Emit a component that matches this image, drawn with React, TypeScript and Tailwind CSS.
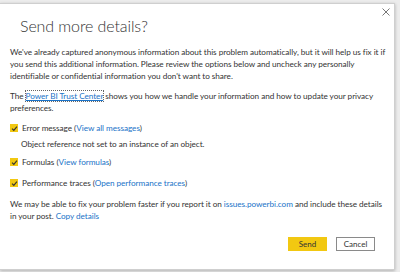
import React from "react";

function Check() {
  return (
    <span className="inline-flex items-center justify-center w-[8px] h-[8px] bg-[#f2c811] mr-[4px] shrink-0">
      <svg width="7" height="7" viewBox="0 0 8 8">
        <path d="M1.2 4.2 L3.2 6.2 L6.8 1.8" fill="none" stroke="#333" strokeWidth="1.3" />
      </svg>
    </span>
  );
}

export default function App() {
  const link = "text-[#1a73c8]";
  return (
    <div
      className="w-[400px] h-[272px] bg-[#ececec] overflow-hidden"
      style={{ fontFamily: "Lato, 'Open Sans', sans-serif" }}
    >
      <div className="pt-[3px]">
        <div className="relative w-[395px] h-[267px] bg-white border-t border-r border-b border-[#cfcfcf] shadow-[0_1px_3px_rgba(0,0,0,0.25)]">
          <button className="absolute top-[3px] right-[3px] w-[10px] h-[10px] flex items-center justify-center">
            <svg width="8" height="8" viewBox="0 0 8 8">
              <path d="M0.5 0.5 L7.5 7.5 M7.5 0.5 L0.5 7.5" stroke="#777" strokeWidth="1" />
            </svg>
          </button>
          <div className="pt-[10px] pl-[20px] text-[16px] tracking-[-0.1px] leading-[24px] font-light text-[#333] whitespace-nowrap">
            Send more details?
          </div>
          <div className="pl-[10px] text-[8.2px] tracking-[-0.05px] leading-[12px] text-[#333] whitespace-nowrap">
            <div className="mt-[8px]">
              We've already captured anonymous information about this problem automatically, but it will help us fix it if
            </div>
            <div>you send this additional information. Please review the options below and uncheck any personally</div>
            <div>identifiable or confidential information you don't want to share.</div>
            <div className="mt-[8px]">
              The{" "}
              <span className={`${link} underline outline outline-1 outline-dotted outline-[#666]`}>Power BI Trust Center</span>{" "}
              shows you how we handle your information and how to update your privacy
            </div>
            <div>preferences.</div>
            <div className="mt-[8px] flex items-center">
              <Check />
              <span>
                Error message (<span className={link}>View all messages</span>)
              </span>
            </div>
            <div className="mt-[4px] pl-[11px]">Object reference not set to an instance of an object.</div>
            <div className="mt-[6px] flex items-center">
              <Check />
              <span>
                Formulas (<span className={link}>View formulas</span>)
              </span>
            </div>
            <div className="mt-[9px] flex items-center">
              <Check />
              <span>
                Performance traces (<span className={link}>Open performance traces</span>)
              </span>
            </div>
            <div className="mt-[9px]">
              We may be able to fix your problem faster if you report it on{" "}
              <span className={link}>issues.powerbi.com</span> and include these details
            </div>
            <div>
              in your post. <span className={link}>Copy details</span>
            </div>
          </div>
          <div className="mt-[15px] pr-[19px] flex justify-end gap-[9px]">
            <button className="w-[39px] h-[14px] bg-[#f2c811] text-[8px] leading-[14px] text-[#333]">Send</button>
            <button className="w-[39px] h-[14px] bg-white border border-[#8a8a8a] text-[8px] leading-[12px] text-[#333]">
              Cancel
            </button>
          </div>
        </div>
      </div>
    </div>
  );
}
